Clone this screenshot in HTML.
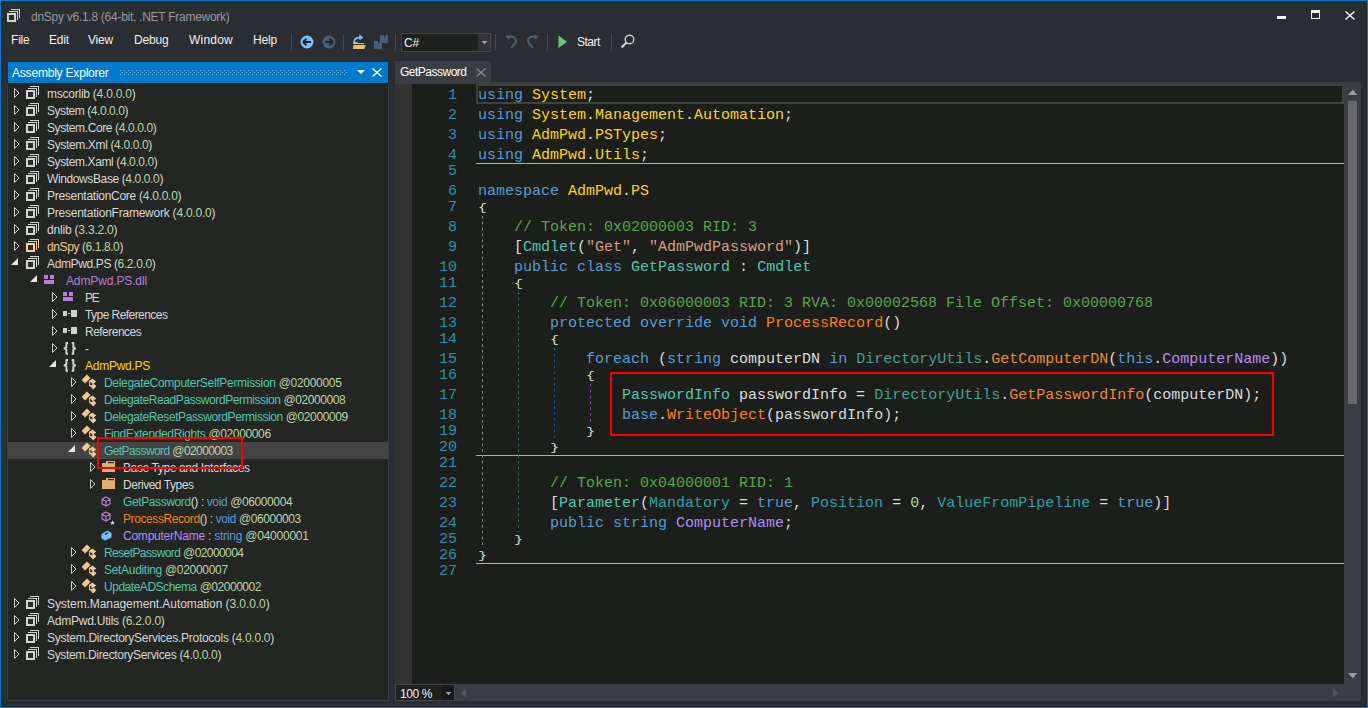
<!DOCTYPE html>
<html><head><meta charset="utf-8"><style>
*{margin:0;padding:0;box-sizing:border-box}
html,body{width:1368px;height:708px;overflow:hidden;background:#2a2d32;font-family:"Liberation Sans",sans-serif}
.a{position:absolute}
.ic{position:absolute;overflow:visible}
#win{position:absolute;left:0;top:0;width:1368px;height:708px;border:1px solid #007acc}
.menu{position:absolute;top:32px;font-size:12px;letter-spacing:-0.2px;color:#f1f1f1;line-height:17px}
.tb-sep{position:absolute;top:34px;width:1px;height:17px;background:#46464a}
#tree{position:absolute;left:7px;top:83px;width:382px;height:618px;background:#232623;border:1px solid #3a3d41;border-top:1px solid #1f1e1b}
.tt{position:absolute;font-size:12px;letter-spacing:-0.2px;line-height:17px;white-space:pre;padding-top:1px}
.sel{position:absolute;left:8px;width:380px;height:17px;background:#444444}
.nsi{position:absolute;font-size:12px;font-weight:bold;color:#d0d0d0;line-height:15px;letter-spacing:0px}
.ln{position:absolute;left:412px;width:45px;text-align:right;font-family:"Liberation Mono",monospace;font-size:15px;line-height:20px;color:#2b91af}
.br{display:inline-block;transform:scaleY(0.786);transform-origin:0 11.35px}
.cl{position:absolute;left:478px;font-family:"Liberation Mono",monospace;font-size:15px;line-height:20px;white-space:pre}
</style></head><body>
<div id="win"></div>
<div class="a" style="left:1px;top:1px;width:1366px;height:706px;border:1px solid #2b2727"></div>

<svg class="ic" style="left:6px;top:9px" width="16" height="16"><rect x="5" y="0" width="9" height="1" fill="#d2d4d0"/><rect x="13" y="0" width="1" height="9" fill="#d2d4d0"/><rect x="3" y="2" width="9" height="1" fill="#d2d4d0"/><rect x="11" y="2" width="1" height="9" fill="#d2d4d0"/><rect x="1" y="4" width="9" height="9" fill="#d2d4d0"/><rect x="3" y="6" width="5" height="5" fill="#2b2a2b"/></svg>
<div class="a" style="left:31px;top:9px;font-size:12px;letter-spacing:-0.27px;line-height:17px;color:#999999">dnSpy v6.1.8 (64-bit, .NET Framework)</div>
<div class="a" style="left:1277px;top:16px;width:9px;height:3px;background:#fff"></div>
<div class="a" style="left:1311px;top:10px;width:9px;height:9px;border:1px solid #fff;border-top-width:3px"></div>
<svg class="ic" style="left:1345px;top:11px" width="10" height="9"><path d="M0.5 0.5L9.5 8.5M9.5 0.5L0.5 8.5" stroke="#fff" stroke-width="1.3"/></svg>

<div class="menu" style="left:11px">File</div>
<div class="menu" style="left:49px">Edit</div>
<div class="menu" style="left:88px">View</div>
<div class="menu" style="left:134px">Debug</div>
<div class="menu" style="left:189px;letter-spacing:0.2px">Window</div>
<div class="menu" style="left:253px">Help</div>
<div class="tb-sep" style="left:291px"></div>
<div class="tb-sep" style="left:343px"></div>
<div class="tb-sep" style="left:395px"></div>
<div class="tb-sep" style="left:495px"></div>
<div class="tb-sep" style="left:547px"></div>
<div class="tb-sep" style="left:611px"></div>
<svg class="ic" style="left:300px;top:35px" width="14" height="14"><circle cx="7" cy="7" r="6.5" fill="#75beff"/><path d="M3 7H11 M3 7L6.5 3.8 M3 7L6.5 10.2" stroke="#252526" stroke-width="2" fill="none"/></svg>
<svg class="ic" style="left:322px;top:35px" width="14" height="14"><circle cx="7" cy="7" r="6.5" fill="#4a5f75"/><path d="M3 7H11 M11 7L7.5 3.8 M11 7L7.5 10.2" stroke="#252526" stroke-width="2" fill="none"/></svg>
<svg class="ic" style="left:351px;top:34px" width="17" height="17"><path d="M1.5 7.5 H6 L7 8.5 H13.5 V15.5 H1.5Z" fill="#dcb06e" stroke="#1a1a1a" stroke-width="0.8"/><path d="M2 10.5 H15.5 L13.5 15.5 H1.5Z" fill="#e6c07a" stroke="#1a1a1a" stroke-width="0.8"/><path d="M3 8.5 C3 4.5 5.5 3.6 8.8 3.6" stroke="#75beff" stroke-width="1.8" fill="none"/><path d="M8.3 0.6 L12.2 3.6 L8.3 6.6Z" fill="#75beff"/></svg>
<svg class="ic" style="left:373px;top:34px" width="16" height="16"><path d="M7 1 H15 V9 H7Z" fill="#4a5f75"/><rect x="11" y="1" width="1.2" height="2.5" fill="#2a2d32"/><path d="M1 7 H9 V15 H1Z" fill="#4a5f75"/><rect x="5" y="7" width="1.2" height="2.5" fill="#2a2d32"/></svg>
<div class="a" style="left:401px;top:33px;width:90px;height:19px;border:1px solid #46464a;background:#1f211f"></div>
<div class="a" style="left:478px;top:34px;width:12px;height:17px;background:#333337"></div>
<svg class="ic" style="left:481px;top:41px" width="8" height="5"><path d="M0.5 0H6.5L3.5 3.2Z" fill="#a8a8a8"/></svg>
<div class="a" style="left:404px;top:35px;font-size:12px;letter-spacing:-0.2px;line-height:17px;color:#f1f1f1">C#</div>
<svg class="ic" style="left:504px;top:34px" width="14" height="15"><path d="M4 3.5 C9 1 12 4 12 7 C12 9 10 11 7 14" stroke="#4a6075" stroke-width="2" fill="none"/><path d="M1 2 L6 1 L5 6Z" fill="#4a6075"/></svg>
<svg class="ic" style="left:526px;top:34px" width="14" height="15"><path d="M10 3.5 C5 1 2 4 2 7 C2 9 4 11 7 14" stroke="#4a6075" stroke-width="2" fill="none"/><path d="M13 2 L8 1 L9 6Z" fill="#4a6075"/></svg>
<svg class="ic" style="left:558px;top:35px" width="10" height="14"><path d="M0.5 0.5 L9 6.75 L0.5 13Z" fill="#6cc57c"/></svg>
<div class="a" style="left:577px;top:34px;font-size:12px;letter-spacing:-0.5px;line-height:17px;color:#f1f1f1">Start</div>
<svg class="ic" style="left:620px;top:34px" width="15" height="15"><circle cx="9.5" cy="5.5" r="4.3" stroke="#d0d0d0" stroke-width="1.4" fill="#2a2a2a"/><path d="M6.3 8.7 L1.5 13.5" stroke="#d0d0d0" stroke-width="2.2"/></svg>

<div class="a" style="left:8px;top:62px;width:380px;height:21px;background:#007acc"></div>
<div class="a" style="left:12px;top:65px;font-size:12px;letter-spacing:-0.2px;line-height:17px;color:#ffffff">Assembly Explorer</div>
<svg class="ic" style="left:120px;top:70px" width="227" height="5"><defs><pattern id="dots" width="4" height="4" patternUnits="userSpaceOnUse"><rect x="0" y="0" width="1" height="1" fill="#7db8e6"/><rect x="2" y="2" width="1" height="1" fill="#7db8e6"/></pattern></defs><rect width="227" height="5" fill="url(#dots)"/></svg>
<svg class="ic" style="left:357px;top:70px" width="8" height="5"><path d="M0 0H8L4 4Z" fill="#fff"/></svg>
<svg class="ic" style="left:372px;top:68px" width="10" height="9"><path d="M0.5 0.5L9.5 8.5M9.5 0.5L0.5 8.5" stroke="#fff" stroke-width="1.4"/></svg>
<div id="tree"></div>

<svg class="ic" style="left:13px;top:85px" width="8" height="17"><path d="M1.5 3.5 L6 8 L1.5 12.5Z" stroke="#d0d0d0" fill="none"/></svg>
<svg class="ic" style="left:25px;top:86px" width="16" height="16"><rect x="5" y="0" width="9" height="1" fill="#d2d4d0"/><rect x="13" y="0" width="1" height="9" fill="#d2d4d0"/><rect x="3" y="2" width="9" height="1" fill="#d2d4d0"/><rect x="11" y="2" width="1" height="9" fill="#d2d4d0"/><rect x="1" y="4" width="9" height="9" fill="#d2d4d0"/><rect x="3" y="6" width="5" height="5" fill="#2b2a2b"/></svg>
<div class="tt" style="left:47px;top:85px;letter-spacing:-0.241px"><span style="color:#d8d8d8">mscorlib</span><span style="color:#d8d8d8"> (</span><span style="color:#bcd6aa">4.0.0.0</span><span style="color:#d8d8d8">)</span></div>
<svg class="ic" style="left:13px;top:102px" width="8" height="17"><path d="M1.5 3.5 L6 8 L1.5 12.5Z" stroke="#d0d0d0" fill="none"/></svg>
<svg class="ic" style="left:25px;top:103px" width="16" height="16"><rect x="5" y="0" width="9" height="1" fill="#d2d4d0"/><rect x="13" y="0" width="1" height="9" fill="#d2d4d0"/><rect x="3" y="2" width="9" height="1" fill="#d2d4d0"/><rect x="11" y="2" width="1" height="9" fill="#d2d4d0"/><rect x="1" y="4" width="9" height="9" fill="#d2d4d0"/><rect x="3" y="6" width="5" height="5" fill="#2b2a2b"/></svg>
<div class="tt" style="left:47px;top:102px;letter-spacing:-0.440px"><span style="color:#d8d8d8">System</span><span style="color:#d8d8d8"> (</span><span style="color:#bcd6aa">4.0.0.0</span><span style="color:#d8d8d8">)</span></div>
<svg class="ic" style="left:13px;top:119px" width="8" height="17"><path d="M1.5 3.5 L6 8 L1.5 12.5Z" stroke="#d0d0d0" fill="none"/></svg>
<svg class="ic" style="left:25px;top:120px" width="16" height="16"><rect x="5" y="0" width="9" height="1" fill="#d2d4d0"/><rect x="13" y="0" width="1" height="9" fill="#d2d4d0"/><rect x="3" y="2" width="9" height="1" fill="#d2d4d0"/><rect x="11" y="2" width="1" height="9" fill="#d2d4d0"/><rect x="1" y="4" width="9" height="9" fill="#d2d4d0"/><rect x="3" y="6" width="5" height="5" fill="#2b2a2b"/></svg>
<div class="tt" style="left:47px;top:119px;letter-spacing:-0.385px"><span style="color:#d8d8d8">System.Core</span><span style="color:#d8d8d8"> (</span><span style="color:#bcd6aa">4.0.0.0</span><span style="color:#d8d8d8">)</span></div>
<svg class="ic" style="left:13px;top:136px" width="8" height="17"><path d="M1.5 3.5 L6 8 L1.5 12.5Z" stroke="#d0d0d0" fill="none"/></svg>
<svg class="ic" style="left:25px;top:137px" width="16" height="16"><rect x="5" y="0" width="9" height="1" fill="#d2d4d0"/><rect x="13" y="0" width="1" height="9" fill="#d2d4d0"/><rect x="3" y="2" width="9" height="1" fill="#d2d4d0"/><rect x="11" y="2" width="1" height="9" fill="#d2d4d0"/><rect x="1" y="4" width="9" height="9" fill="#d2d4d0"/><rect x="3" y="6" width="5" height="5" fill="#2b2a2b"/></svg>
<div class="tt" style="left:47px;top:136px;letter-spacing:-0.353px"><span style="color:#d8d8d8">System.Xml</span><span style="color:#d8d8d8"> (</span><span style="color:#bcd6aa">4.0.0.0</span><span style="color:#d8d8d8">)</span></div>
<svg class="ic" style="left:13px;top:153px" width="8" height="17"><path d="M1.5 3.5 L6 8 L1.5 12.5Z" stroke="#d0d0d0" fill="none"/></svg>
<svg class="ic" style="left:25px;top:154px" width="16" height="16"><rect x="5" y="0" width="9" height="1" fill="#d2d4d0"/><rect x="13" y="0" width="1" height="9" fill="#d2d4d0"/><rect x="3" y="2" width="9" height="1" fill="#d2d4d0"/><rect x="11" y="2" width="1" height="9" fill="#d2d4d0"/><rect x="1" y="4" width="9" height="9" fill="#d2d4d0"/><rect x="3" y="6" width="5" height="5" fill="#2b2a2b"/></svg>
<div class="tt" style="left:47px;top:153px;letter-spacing:-0.395px"><span style="color:#d8d8d8">System.Xaml</span><span style="color:#d8d8d8"> (</span><span style="color:#bcd6aa">4.0.0.0</span><span style="color:#d8d8d8">)</span></div>
<svg class="ic" style="left:13px;top:170px" width="8" height="17"><path d="M1.5 3.5 L6 8 L1.5 12.5Z" stroke="#d0d0d0" fill="none"/></svg>
<svg class="ic" style="left:25px;top:171px" width="16" height="16"><rect x="5" y="0" width="9" height="1" fill="#d2d4d0"/><rect x="13" y="0" width="1" height="9" fill="#d2d4d0"/><rect x="3" y="2" width="9" height="1" fill="#d2d4d0"/><rect x="11" y="2" width="1" height="9" fill="#d2d4d0"/><rect x="1" y="4" width="9" height="9" fill="#d2d4d0"/><rect x="3" y="6" width="5" height="5" fill="#2b2a2b"/></svg>
<div class="tt" style="left:47px;top:170px;letter-spacing:-0.385px"><span style="color:#d8d8d8">WindowsBase</span><span style="color:#d8d8d8"> (</span><span style="color:#bcd6aa">4.0.0.0</span><span style="color:#d8d8d8">)</span></div>
<svg class="ic" style="left:13px;top:187px" width="8" height="17"><path d="M1.5 3.5 L6 8 L1.5 12.5Z" stroke="#d0d0d0" fill="none"/></svg>
<svg class="ic" style="left:25px;top:188px" width="16" height="16"><rect x="5" y="0" width="9" height="1" fill="#d2d4d0"/><rect x="13" y="0" width="1" height="9" fill="#d2d4d0"/><rect x="3" y="2" width="9" height="1" fill="#d2d4d0"/><rect x="11" y="2" width="1" height="9" fill="#d2d4d0"/><rect x="1" y="4" width="9" height="9" fill="#d2d4d0"/><rect x="3" y="6" width="5" height="5" fill="#2b2a2b"/></svg>
<div class="tt" style="left:47px;top:187px;letter-spacing:-0.276px"><span style="color:#d8d8d8">PresentationCore</span><span style="color:#d8d8d8"> (</span><span style="color:#bcd6aa">4.0.0.0</span><span style="color:#d8d8d8">)</span></div>
<svg class="ic" style="left:13px;top:204px" width="8" height="17"><path d="M1.5 3.5 L6 8 L1.5 12.5Z" stroke="#d0d0d0" fill="none"/></svg>
<svg class="ic" style="left:25px;top:205px" width="16" height="16"><rect x="5" y="0" width="9" height="1" fill="#d2d4d0"/><rect x="13" y="0" width="1" height="9" fill="#d2d4d0"/><rect x="3" y="2" width="9" height="1" fill="#d2d4d0"/><rect x="11" y="2" width="1" height="9" fill="#d2d4d0"/><rect x="1" y="4" width="9" height="9" fill="#d2d4d0"/><rect x="3" y="6" width="5" height="5" fill="#2b2a2b"/></svg>
<div class="tt" style="left:47px;top:204px;letter-spacing:-0.233px"><span style="color:#d8d8d8">PresentationFramework</span><span style="color:#d8d8d8"> (</span><span style="color:#bcd6aa">4.0.0.0</span><span style="color:#d8d8d8">)</span></div>
<svg class="ic" style="left:13px;top:221px" width="8" height="17"><path d="M1.5 3.5 L6 8 L1.5 12.5Z" stroke="#d0d0d0" fill="none"/></svg>
<svg class="ic" style="left:25px;top:222px" width="16" height="16"><rect x="5" y="0" width="9" height="1" fill="#d2d4d0"/><rect x="13" y="0" width="1" height="9" fill="#d2d4d0"/><rect x="3" y="2" width="9" height="1" fill="#d2d4d0"/><rect x="11" y="2" width="1" height="9" fill="#d2d4d0"/><rect x="1" y="4" width="9" height="9" fill="#d2d4d0"/><rect x="3" y="6" width="5" height="5" fill="#2b2a2b"/></svg>
<div class="tt" style="left:47px;top:221px;letter-spacing:-0.200px"><span style="color:#d8d8d8">dnlib</span><span style="color:#d8d8d8"> (</span><span style="color:#bcd6aa">3.3.2.0</span><span style="color:#d8d8d8">)</span></div>
<svg class="ic" style="left:13px;top:238px" width="8" height="17"><path d="M1.5 3.5 L6 8 L1.5 12.5Z" stroke="#d0d0d0" fill="none"/></svg>
<svg class="ic" style="left:25px;top:239px" width="16" height="16"><rect x="5" y="0" width="9" height="1" fill="#f8cf8f"/><rect x="13" y="0" width="1" height="9" fill="#f8cf8f"/><rect x="3" y="2" width="9" height="1" fill="#f8cf8f"/><rect x="11" y="2" width="1" height="9" fill="#f8cf8f"/><rect x="1" y="4" width="9" height="9" fill="#f8cf8f"/><rect x="3" y="6" width="5" height="5" fill="#2b2a2b"/></svg>
<div class="tt" style="left:47px;top:238px;letter-spacing:-0.407px"><span style="color:#f5c98a">dnSpy</span><span style="color:#d8d8d8"> (</span><span style="color:#bcd6aa">6.1.8.0</span><span style="color:#d8d8d8">)</span></div>
<svg class="ic" style="left:10px;top:255px" width="10" height="17"><path d="M8 3 V10 H1Z" fill="#e6e6e6"/></svg>
<svg class="ic" style="left:25px;top:256px" width="16" height="16"><rect x="5" y="0" width="9" height="1" fill="#d2d4d0"/><rect x="13" y="0" width="1" height="9" fill="#d2d4d0"/><rect x="3" y="2" width="9" height="1" fill="#d2d4d0"/><rect x="11" y="2" width="1" height="9" fill="#d2d4d0"/><rect x="1" y="4" width="9" height="9" fill="#d2d4d0"/><rect x="3" y="6" width="5" height="5" fill="#2b2a2b"/></svg>
<div class="tt" style="left:47px;top:255px;letter-spacing:-0.372px"><span style="color:#d8d8d8">AdmPwd.PS</span><span style="color:#d8d8d8"> (</span><span style="color:#bcd6aa">6.2.0.0</span><span style="color:#d8d8d8">)</span></div>
<svg class="ic" style="left:29px;top:272px" width="10" height="17"><path d="M8 3 V10 H1Z" fill="#e6e6e6"/></svg>
<svg class="ic" style="left:44px;top:273px" width="16" height="16"><rect x="0" y="2" width="4" height="4" fill="#b57edc"/><rect x="6" y="2" width="4" height="4" fill="#b57edc"/><rect x="0" y="7" width="10" height="4" fill="#b57edc"/></svg>
<div class="tt" style="left:66px;top:272px;letter-spacing:-0.133px"><span style="color:#b57edc">AdmPwd.PS.dll</span></div>
<svg class="ic" style="left:51px;top:289px" width="8" height="17"><path d="M1.5 3.5 L6 8 L1.5 12.5Z" stroke="#d0d0d0" fill="none"/></svg>
<svg class="ic" style="left:63px;top:290px" width="16" height="16"><rect x="0" y="2" width="4" height="4" fill="#b57edc"/><rect x="6" y="2" width="4" height="4" fill="#b57edc"/><rect x="0" y="7" width="10" height="4" fill="#b57edc"/></svg>
<div class="tt" style="left:85px;top:289px;letter-spacing:-1.200px"><span style="color:#d8d8d8">PE</span></div>
<svg class="ic" style="left:51px;top:306px" width="8" height="17"><path d="M1.5 3.5 L6 8 L1.5 12.5Z" stroke="#d0d0d0" fill="none"/></svg>
<svg class="ic" style="left:63px;top:307px" width="16" height="16"><rect x="0" y="4" width="4" height="5" fill="#d0d2ce"/><rect x="5" y="6" width="2" height="1" fill="#d0d2ce"/><rect x="8" y="3" width="6" height="7" fill="#d0d2ce"/></svg>
<div class="tt" style="left:85px;top:306px;letter-spacing:-0.557px"><span style="color:#d8d8d8">Type References</span></div>
<svg class="ic" style="left:51px;top:323px" width="8" height="17"><path d="M1.5 3.5 L6 8 L1.5 12.5Z" stroke="#d0d0d0" fill="none"/></svg>
<svg class="ic" style="left:63px;top:324px" width="16" height="16"><rect x="0" y="4" width="4" height="5" fill="#d0d2ce"/><rect x="5" y="6" width="2" height="1" fill="#d0d2ce"/><rect x="8" y="3" width="6" height="7" fill="#d0d2ce"/></svg>
<div class="tt" style="left:85px;top:323px;letter-spacing:-0.522px"><span style="color:#d8d8d8">References</span></div>
<svg class="ic" style="left:51px;top:340px" width="8" height="17"><path d="M1.5 3.5 L6 8 L1.5 12.5Z" stroke="#d0d0d0" fill="none"/></svg>
<svg class="ic" style="left:63px;top:341px" width="16" height="16"><path d="M5 2 H3.4 V6.3 L1.5 7.4 L3.4 8.5 V12.8 H5 M8.7 2 H10.3 V6.3 L12.2 7.4 L10.3 8.5 V12.8 H8.7" stroke="#d3d5d1" stroke-width="1.9" stroke-linejoin="round" fill="none"/></svg>
<div class="tt" style="left:85px;top:340px;letter-spacing:0.000px"><span style="color:#d8d8d8">-</span></div>
<svg class="ic" style="left:48px;top:357px" width="10" height="17"><path d="M8 3 V10 H1Z" fill="#e6e6e6"/></svg>
<svg class="ic" style="left:63px;top:358px" width="16" height="16"><path d="M5 2 H3.4 V6.3 L1.5 7.4 L3.4 8.5 V12.8 H5 M8.7 2 H10.3 V6.3 L12.2 7.4 L10.3 8.5 V12.8 H8.7" stroke="#d3d5d1" stroke-width="1.9" stroke-linejoin="round" fill="none"/></svg>
<div class="tt" style="left:85px;top:357px;letter-spacing:-0.263px"><span style="color:#ffd700">AdmPwd.PS</span></div>
<svg class="ic" style="left:70px;top:374px" width="8" height="17"><path d="M1.5 3.5 L6 8 L1.5 12.5Z" stroke="#d0d0d0" fill="none"/></svg>
<svg class="ic" style="left:80px;top:373px" width="18" height="18"><path d="M1.6 6.9 L6.9 1.6 L10.5 5.1 L5.1 10.5Z" fill="#f2c98c"/><path d="M8.8 8.2 L12.4 5.4 L16.3 8.4 L12.2 11.6Z" fill="#f2c98c"/><path d="M10.4 13.4 L13.5 10.3 L16.4 13.2 L13.1 16.4Z" fill="#f2c98c"/><path d="M9.6 7.8 V12.6 H11.6 M9.6 8 H11" stroke="#f2c98c" stroke-width="1.1" fill="none"/><path d="M10.4 9 L12.2 11.2" stroke="#111" stroke-width="0.9"/></svg>
<div class="tt" style="left:104px;top:374px;letter-spacing:-0.303px"><span style="color:#4ec9b0">DelegateComputerSelfPermission</span><span style="color:#bcd6aa"> @02000005</span></div>
<svg class="ic" style="left:70px;top:391px" width="8" height="17"><path d="M1.5 3.5 L6 8 L1.5 12.5Z" stroke="#d0d0d0" fill="none"/></svg>
<svg class="ic" style="left:80px;top:390px" width="18" height="18"><path d="M1.6 6.9 L6.9 1.6 L10.5 5.1 L5.1 10.5Z" fill="#f2c98c"/><path d="M8.8 8.2 L12.4 5.4 L16.3 8.4 L12.2 11.6Z" fill="#f2c98c"/><path d="M10.4 13.4 L13.5 10.3 L16.4 13.2 L13.1 16.4Z" fill="#f2c98c"/><path d="M9.6 7.8 V12.6 H11.6 M9.6 8 H11" stroke="#f2c98c" stroke-width="1.1" fill="none"/><path d="M10.4 9 L12.2 11.2" stroke="#111" stroke-width="0.9"/></svg>
<div class="tt" style="left:104px;top:391px;letter-spacing:-0.410px"><span style="color:#4ec9b0">DelegateReadPasswordPermission</span><span style="color:#bcd6aa"> @02000008</span></div>
<svg class="ic" style="left:70px;top:408px" width="8" height="17"><path d="M1.5 3.5 L6 8 L1.5 12.5Z" stroke="#d0d0d0" fill="none"/></svg>
<svg class="ic" style="left:80px;top:407px" width="18" height="18"><path d="M1.6 6.9 L6.9 1.6 L10.5 5.1 L5.1 10.5Z" fill="#f2c98c"/><path d="M8.8 8.2 L12.4 5.4 L16.3 8.4 L12.2 11.6Z" fill="#f2c98c"/><path d="M10.4 13.4 L13.5 10.3 L16.4 13.2 L13.1 16.4Z" fill="#f2c98c"/><path d="M9.6 7.8 V12.6 H11.6 M9.6 8 H11" stroke="#f2c98c" stroke-width="1.1" fill="none"/><path d="M10.4 9 L12.2 11.2" stroke="#111" stroke-width="0.9"/></svg>
<div class="tt" style="left:104px;top:408px;letter-spacing:-0.405px"><span style="color:#4ec9b0">DelegateResetPasswordPermission</span><span style="color:#bcd6aa"> @02000009</span></div>
<svg class="ic" style="left:70px;top:425px" width="8" height="17"><path d="M1.5 3.5 L6 8 L1.5 12.5Z" stroke="#d0d0d0" fill="none"/></svg>
<svg class="ic" style="left:80px;top:424px" width="18" height="18"><path d="M1.6 6.9 L6.9 1.6 L10.5 5.1 L5.1 10.5Z" fill="#f2c98c"/><path d="M8.8 8.2 L12.4 5.4 L16.3 8.4 L12.2 11.6Z" fill="#f2c98c"/><path d="M10.4 13.4 L13.5 10.3 L16.4 13.2 L13.1 16.4Z" fill="#f2c98c"/><path d="M9.6 7.8 V12.6 H11.6 M9.6 8 H11" stroke="#f2c98c" stroke-width="1.1" fill="none"/><path d="M10.4 9 L12.2 11.2" stroke="#111" stroke-width="0.9"/></svg>
<div class="tt" style="left:104px;top:425px;letter-spacing:-0.367px"><span style="color:#4ec9b0">FindExtendedRights</span><span style="color:#bcd6aa"> @02000006</span></div>
<div class="sel" style="top:442px"></div>
<svg class="ic" style="left:67px;top:442px" width="10" height="17"><path d="M8 3 V10 H1Z" fill="#e6e6e6"/></svg>
<svg class="ic" style="left:80px;top:441px" width="18" height="18"><path d="M1.6 6.9 L6.9 1.6 L10.5 5.1 L5.1 10.5Z" fill="#f2c98c"/><path d="M8.8 8.2 L12.4 5.4 L16.3 8.4 L12.2 11.6Z" fill="#f2c98c"/><path d="M10.4 13.4 L13.5 10.3 L16.4 13.2 L13.1 16.4Z" fill="#f2c98c"/><path d="M9.6 7.8 V12.6 H11.6 M9.6 8 H11" stroke="#f2c98c" stroke-width="1.1" fill="none"/><path d="M10.4 9 L12.2 11.2" stroke="#111" stroke-width="0.9"/></svg>
<div class="tt" style="left:104px;top:442px;letter-spacing:-0.590px"><span style="color:#4ec9b0">GetPassword</span><span style="color:#bcd6aa"> @02000003</span></div>
<svg class="ic" style="left:89px;top:459px" width="8" height="17"><path d="M1.5 3.5 L6 8 L1.5 12.5Z" stroke="#d0d0d0" fill="none"/></svg>
<svg class="ic" style="left:102px;top:460px" width="16" height="16"><rect x="0" y="3" width="13" height="9" fill="#dcb06e"/><rect x="4" y="1" width="9" height="3" fill="#dcb06e"/><rect x="6" y="2" width="6" height="1.2" fill="#2a2a2a"/></svg>
<div class="tt" style="left:123px;top:459px;letter-spacing:-0.387px"><span style="color:#d8d8d8">Base Type and Interfaces</span></div>
<svg class="ic" style="left:89px;top:476px" width="8" height="17"><path d="M1.5 3.5 L6 8 L1.5 12.5Z" stroke="#d0d0d0" fill="none"/></svg>
<svg class="ic" style="left:102px;top:477px" width="16" height="16"><rect x="0" y="3" width="13" height="9" fill="#dcb06e"/><rect x="4" y="1" width="9" height="3" fill="#dcb06e"/><rect x="6" y="2" width="6" height="1.2" fill="#2a2a2a"/></svg>
<div class="tt" style="left:123px;top:476px;letter-spacing:-0.467px"><span style="color:#d8d8d8">Derived Types</span></div>
<svg class="ic" style="left:101px;top:494px" width="18" height="18"><path d="M5 3 L9 5.2 V9.8 L5 12 L1 9.8 V5.2Z M1 5.2 L5 7.4 L9 5.2 M5 7.4V12" stroke="#b180d7" stroke-width="1.1" fill="none"/></svg>
<div class="tt" style="left:123px;top:493px;letter-spacing:-0.393px"><span style="color:#4ec9b0">GetPassword</span><span style="color:#d8d8d8">()</span><span style="color:#d8d8d8"> : </span><span style="color:#569cd6">void</span><span style="color:#bcd6aa"> @06000004</span></div>
<svg class="ic" style="left:101px;top:509px" width="18" height="18"><path d="M5 3 L9 5.2 V9.8 L5 12 L1 9.8 V5.2Z M1 5.2 L5 7.4 L9 5.2 M5 7.4V12" stroke="#b180d7" stroke-width="1.1" fill="none"/><path d="M11.5 11 L12.2 12.9 L14.2 12.9 L12.6 14.1 L13.2 16 L11.5 14.9 L9.8 16 L10.4 14.1 L8.8 12.9 L10.8 12.9Z" fill="#d0d0d0"/></svg>
<div class="tt" style="left:123px;top:510px;letter-spacing:-0.410px"><span style="color:#ff8000">ProcessRecord</span><span style="color:#d8d8d8">()</span><span style="color:#d8d8d8"> : </span><span style="color:#569cd6">void</span><span style="color:#bcd6aa"> @06000003</span></div>
<svg class="ic" style="left:101px;top:528px" width="16" height="16"><path d="M0.5 6 L6.5 2.5 L10.5 5 V9.5 L4 12.5 L0.5 10.5Z" fill="#75beff"/><path d="M4 6.3 L7 4.6" stroke="#1e3a55" stroke-width="1.5"/></svg>
<div class="tt" style="left:123px;top:527px;letter-spacing:-0.233px"><span style="color:#b48cf5">ComputerName</span><span style="color:#d8d8d8"> : </span><span style="color:#569cd6">string</span><span style="color:#bcd6aa"> @04000001</span></div>
<svg class="ic" style="left:70px;top:544px" width="8" height="17"><path d="M1.5 3.5 L6 8 L1.5 12.5Z" stroke="#d0d0d0" fill="none"/></svg>
<svg class="ic" style="left:80px;top:543px" width="18" height="18"><path d="M1.6 6.9 L6.9 1.6 L10.5 5.1 L5.1 10.5Z" fill="#f2c98c"/><path d="M8.8 8.2 L12.4 5.4 L16.3 8.4 L12.2 11.6Z" fill="#f2c98c"/><path d="M10.4 13.4 L13.5 10.3 L16.4 13.2 L13.1 16.4Z" fill="#f2c98c"/><path d="M9.6 7.8 V12.6 H11.6 M9.6 8 H11" stroke="#f2c98c" stroke-width="1.1" fill="none"/><path d="M10.4 9 L12.2 11.2" stroke="#111" stroke-width="0.9"/></svg>
<div class="tt" style="left:104px;top:544px;letter-spacing:-0.591px"><span style="color:#4ec9b0">ResetPassword</span><span style="color:#bcd6aa"> @02000004</span></div>
<svg class="ic" style="left:70px;top:561px" width="8" height="17"><path d="M1.5 3.5 L6 8 L1.5 12.5Z" stroke="#d0d0d0" fill="none"/></svg>
<svg class="ic" style="left:80px;top:560px" width="18" height="18"><path d="M1.6 6.9 L6.9 1.6 L10.5 5.1 L5.1 10.5Z" fill="#f2c98c"/><path d="M8.8 8.2 L12.4 5.4 L16.3 8.4 L12.2 11.6Z" fill="#f2c98c"/><path d="M10.4 13.4 L13.5 10.3 L16.4 13.2 L13.1 16.4Z" fill="#f2c98c"/><path d="M9.6 7.8 V12.6 H11.6 M9.6 8 H11" stroke="#f2c98c" stroke-width="1.1" fill="none"/><path d="M10.4 9 L12.2 11.2" stroke="#111" stroke-width="0.9"/></svg>
<div class="tt" style="left:104px;top:561px;letter-spacing:-0.310px"><span style="color:#4ec9b0">SetAuditing</span><span style="color:#bcd6aa"> @02000007</span></div>
<svg class="ic" style="left:70px;top:578px" width="8" height="17"><path d="M1.5 3.5 L6 8 L1.5 12.5Z" stroke="#d0d0d0" fill="none"/></svg>
<svg class="ic" style="left:80px;top:577px" width="18" height="18"><path d="M1.6 6.9 L6.9 1.6 L10.5 5.1 L5.1 10.5Z" fill="#f2c98c"/><path d="M8.8 8.2 L12.4 5.4 L16.3 8.4 L12.2 11.6Z" fill="#f2c98c"/><path d="M10.4 13.4 L13.5 10.3 L16.4 13.2 L13.1 16.4Z" fill="#f2c98c"/><path d="M9.6 7.8 V12.6 H11.6 M9.6 8 H11" stroke="#f2c98c" stroke-width="1.1" fill="none"/><path d="M10.4 9 L12.2 11.2" stroke="#111" stroke-width="0.9"/></svg>
<div class="tt" style="left:104px;top:578px;letter-spacing:-0.474px"><span style="color:#4ec9b0">UpdateADSchema</span><span style="color:#bcd6aa"> @02000002</span></div>
<svg class="ic" style="left:13px;top:595px" width="8" height="17"><path d="M1.5 3.5 L6 8 L1.5 12.5Z" stroke="#d0d0d0" fill="none"/></svg>
<svg class="ic" style="left:25px;top:596px" width="16" height="16"><rect x="5" y="0" width="9" height="1" fill="#d2d4d0"/><rect x="13" y="0" width="1" height="9" fill="#d2d4d0"/><rect x="3" y="2" width="9" height="1" fill="#d2d4d0"/><rect x="11" y="2" width="1" height="9" fill="#d2d4d0"/><rect x="1" y="4" width="9" height="9" fill="#d2d4d0"/><rect x="3" y="6" width="5" height="5" fill="#2b2a2b"/></svg>
<div class="tt" style="left:47px;top:595px;letter-spacing:-0.076px"><span style="color:#d8d8d8">System.Management.Automation</span><span style="color:#d8d8d8"> (</span><span style="color:#bcd6aa">3.0.0.0</span><span style="color:#d8d8d8">)</span></div>
<svg class="ic" style="left:13px;top:612px" width="8" height="17"><path d="M1.5 3.5 L6 8 L1.5 12.5Z" stroke="#d0d0d0" fill="none"/></svg>
<svg class="ic" style="left:25px;top:613px" width="16" height="16"><rect x="5" y="0" width="9" height="1" fill="#d2d4d0"/><rect x="13" y="0" width="1" height="9" fill="#d2d4d0"/><rect x="3" y="2" width="9" height="1" fill="#d2d4d0"/><rect x="11" y="2" width="1" height="9" fill="#d2d4d0"/><rect x="1" y="4" width="9" height="9" fill="#d2d4d0"/><rect x="3" y="6" width="5" height="5" fill="#2b2a2b"/></svg>
<div class="tt" style="left:47px;top:612px;letter-spacing:-0.233px"><span style="color:#d8d8d8">AdmPwd.Utils</span><span style="color:#d8d8d8"> (</span><span style="color:#bcd6aa">6.2.0.0</span><span style="color:#d8d8d8">)</span></div>
<svg class="ic" style="left:13px;top:629px" width="8" height="17"><path d="M1.5 3.5 L6 8 L1.5 12.5Z" stroke="#d0d0d0" fill="none"/></svg>
<svg class="ic" style="left:25px;top:630px" width="16" height="16"><rect x="5" y="0" width="9" height="1" fill="#d2d4d0"/><rect x="13" y="0" width="1" height="9" fill="#d2d4d0"/><rect x="3" y="2" width="9" height="1" fill="#d2d4d0"/><rect x="11" y="2" width="1" height="9" fill="#d2d4d0"/><rect x="1" y="4" width="9" height="9" fill="#d2d4d0"/><rect x="3" y="6" width="5" height="5" fill="#2b2a2b"/></svg>
<div class="tt" style="left:47px;top:629px;letter-spacing:-0.267px"><span style="color:#d8d8d8">System.DirectoryServices.Protocols</span><span style="color:#d8d8d8"> (</span><span style="color:#bcd6aa">4.0.0.0</span><span style="color:#d8d8d8">)</span></div>
<svg class="ic" style="left:13px;top:646px" width="8" height="17"><path d="M1.5 3.5 L6 8 L1.5 12.5Z" stroke="#d0d0d0" fill="none"/></svg>
<svg class="ic" style="left:25px;top:647px" width="16" height="16"><rect x="5" y="0" width="9" height="1" fill="#d2d4d0"/><rect x="13" y="0" width="1" height="9" fill="#d2d4d0"/><rect x="3" y="2" width="9" height="1" fill="#d2d4d0"/><rect x="11" y="2" width="1" height="9" fill="#d2d4d0"/><rect x="1" y="4" width="9" height="9" fill="#d2d4d0"/><rect x="3" y="6" width="5" height="5" fill="#2b2a2b"/></svg>
<div class="tt" style="left:47px;top:646px;letter-spacing:-0.333px"><span style="color:#d8d8d8">System.DirectoryServices</span><span style="color:#d8d8d8"> (</span><span style="color:#bcd6aa">4.0.0.0</span><span style="color:#d8d8d8">)</span></div>
<div class="a" style="left:97px;top:437px;width:146px;height:32px;border:2px solid #ff0000"></div>
<div class="a" style="left:395px;top:61px;width:96px;height:23px;background:#3a3d41"></div>
<div class="a" style="left:400px;top:64px;font-size:12px;letter-spacing:-0.5px;line-height:17px;color:#ffffff">GetPassword</div>
<svg class="ic" style="left:476px;top:68px" width="10" height="9"><path d="M0.5 0.5L9.5 8.5M9.5 0.5L0.5 8.5" stroke="#8a8a8a" stroke-width="1.3"/></svg>
<div class="a" style="left:395px;top:82px;width:966px;height:2px;background:#3a3d41"></div>
<div class="a" style="left:395px;top:84px;width:17px;height:600px;background:#333333"></div>
<div class="a" style="left:412px;top:84px;width:932px;height:600px;background:#1b1e1b"></div>
<div class="a" style="left:1344px;top:82px;width:17px;height:619px;background:#3a3d41"></div>
<svg class="ic" style="left:1348px;top:89px" width="10" height="6"><path d="M0 6H9.5L4.75 0.5Z" fill="#999"/></svg>
<div class="a" style="left:1348px;top:101px;width:9px;height:303px;background:#686868"></div>
<svg class="ic" style="left:1348px;top:673px" width="10" height="6"><path d="M0 0H9.5L4.75 5.5Z" fill="#999"/></svg>
<div class="a" style="left:455px;top:684px;width:889px;height:17px;background:#3a3d41"></div>
<svg class="ic" style="left:460px;top:688px" width="6" height="10"><path d="M6 0V9.5L0.5 4.75Z" fill="#555"/></svg>
<svg class="ic" style="left:1333px;top:688px" width="6" height="10"><path d="M0 0V9.5L5.5 4.75Z" fill="#555"/></svg>
<div class="a" style="left:395px;top:684px;width:60px;height:17px;border:1px solid #46464a;background:#1f211f"></div>
<div class="a" style="left:442px;top:685px;width:12px;height:15px;background:#1a1a1a"></div>
<svg class="ic" style="left:445px;top:692px" width="8" height="5"><path d="M0.5 0H6.5L3.5 3.2Z" fill="#a0a0a0"/></svg>
<div class="a" style="left:400px;top:686px;font-size:12px;letter-spacing:-0.4px;line-height:17px;color:#f1f1f1">100 %</div>

<div class="a" style="left:476px;top:84px;width:868px;height:20px;border:2px solid #3f423f"></div>
<div class="a" style="left:476px;top:163px;width:868px;height:1px;background:#b0b0b0"></div>
<div class="a" style="left:476px;top:455px;width:868px;height:1px;background:#b0b0b0"></div>
<div class="a" style="left:476px;top:563px;width:868px;height:1px;background:#b0b0b0"></div>

<svg class="ic" style="left:482px;top:216px" width="1" height="332"><line x1="0.5" y1="0" x2="0.5" y2="332" stroke="#8a8a8a" stroke-width="1" stroke-dasharray="2.6 3.23"/></svg>
<svg class="ic" style="left:518px;top:292px" width="1" height="240"><line x1="0.5" y1="0" x2="0.5" y2="240" stroke="#1d7a5c" stroke-width="1" stroke-dasharray="2.6 3.23"/></svg>
<svg class="ic" style="left:554px;top:348px" width="1" height="92"><line x1="0.5" y1="0" x2="0.5" y2="92" stroke="#1b5a82" stroke-width="1" stroke-dasharray="2.6 3.23"/></svg>
<svg class="ic" style="left:590px;top:384px" width="1" height="38"><line x1="0.5" y1="0" x2="0.5" y2="38" stroke="#9048c8" stroke-width="1" stroke-dasharray="2.6 3.23"/></svg>
<div class="ln" style="top:86px">1</div>
<div class="cl" style="top:86px"><span style="color:#569cd6">using</span><span style="color:#dcdcdc"> </span><span style="color:#ffd700">System</span><span style="color:#dcdcdc">;</span></div>
<div class="ln" style="top:106px">2</div>
<div class="cl" style="top:106px"><span style="color:#569cd6">using</span><span style="color:#dcdcdc"> </span><span style="color:#ffd700">System</span><span style="color:#dcdcdc">.</span><span style="color:#ffd700">Management</span><span style="color:#dcdcdc">.</span><span style="color:#ffd700">Automation</span><span style="color:#dcdcdc">;</span></div>
<div class="ln" style="top:126px">3</div>
<div class="cl" style="top:126px"><span style="color:#569cd6">using</span><span style="color:#dcdcdc"> </span><span style="color:#ffd700">AdmPwd</span><span style="color:#dcdcdc">.</span><span style="color:#ffd700">PSTypes</span><span style="color:#dcdcdc">;</span></div>
<div class="ln" style="top:146px">4</div>
<div class="cl" style="top:146px"><span style="color:#569cd6">using</span><span style="color:#dcdcdc"> </span><span style="color:#ffd700">AdmPwd</span><span style="color:#dcdcdc">.</span><span style="color:#ffd700">Utils</span><span style="color:#dcdcdc">;</span></div>
<div class="ln" style="top:162px">5</div>
<div class="ln" style="top:182px">6</div>
<div class="cl" style="top:182px"><span style="color:#569cd6">namespace</span><span style="color:#dcdcdc"> </span><span style="color:#ffd700">AdmPwd</span><span style="color:#dcdcdc">.</span><span style="color:#ffd700">PS</span></div>
<div class="ln" style="top:198px">7</div>
<div class="cl" style="top:198px"><span style="color:#dcdcdc"><span class="br">{</span></span></div>
<div class="ln" style="top:218px">8</div>
<div class="cl" style="top:218px"><span style="color:#dcdcdc">    </span><span style="color:#57a64a">// Token: 0x02000003 RID: 3</span></div>
<div class="ln" style="top:238px">9</div>
<div class="cl" style="top:238px"><span style="color:#dcdcdc">    [</span><span style="color:#4ec9b0">Cmdlet</span><span style="color:#dcdcdc">(</span><span style="color:#d69d85">&quot;Get&quot;</span><span style="color:#dcdcdc">, </span><span style="color:#d69d85">&quot;AdmPwdPassword&quot;</span><span style="color:#dcdcdc">)]</span></div>
<div class="ln" style="top:258px">10</div>
<div class="cl" style="top:258px"><span style="color:#dcdcdc">    </span><span style="color:#569cd6">public</span><span style="color:#dcdcdc"> </span><span style="color:#569cd6">class</span><span style="color:#dcdcdc"> </span><span style="color:#4ec9b0">GetPassword</span><span style="color:#dcdcdc"> : </span><span style="color:#4ec9b0">Cmdlet</span></div>
<div class="ln" style="top:274px">11</div>
<div class="cl" style="top:274px"><span style="color:#dcdcdc">    <span class="br">{</span></span></div>
<div class="ln" style="top:294px">12</div>
<div class="cl" style="top:294px"><span style="color:#dcdcdc">        </span><span style="color:#57a64a">// Token: 0x06000003 RID: 3 RVA: 0x00002568 File Offset: 0x00000768</span></div>
<div class="ln" style="top:314px">13</div>
<div class="cl" style="top:314px"><span style="color:#dcdcdc">        </span><span style="color:#569cd6">protected</span><span style="color:#dcdcdc"> </span><span style="color:#569cd6">override</span><span style="color:#dcdcdc"> </span><span style="color:#569cd6">void</span><span style="color:#dcdcdc"> </span><span style="color:#ff8000">ProcessRecord</span><span style="color:#dcdcdc">()</span></div>
<div class="ln" style="top:330px">14</div>
<div class="cl" style="top:330px"><span style="color:#dcdcdc">        <span class="br">{</span></span></div>
<div class="ln" style="top:350px">15</div>
<div class="cl" style="top:350px"><span style="color:#dcdcdc">            </span><span style="color:#569cd6">foreach</span><span style="color:#dcdcdc"> (</span><span style="color:#569cd6">string</span><span style="color:#dcdcdc"> </span><span style="color:#dcdcdc">computerDN</span><span style="color:#dcdcdc"> </span><span style="color:#569cd6">in</span><span style="color:#dcdcdc"> </span><span style="color:#48a090">DirectoryUtils</span><span style="color:#dcdcdc">.</span><span style="color:#ee8a28">GetComputerDN</span><span style="color:#dcdcdc">(</span><span style="color:#569cd6">this</span><span style="color:#dcdcdc">.</span><span style="color:#b48cf5">ComputerName</span><span style="color:#dcdcdc">))</span></div>
<div class="ln" style="top:366px">16</div>
<div class="cl" style="top:366px"><span style="color:#dcdcdc">            <span class="br">{</span></span></div>
<div class="ln" style="top:386px">17</div>
<div class="cl" style="top:386px"><span style="color:#dcdcdc">                </span><span style="color:#4ec9b0">PasswordInfo</span><span style="color:#dcdcdc"> </span><span style="color:#dcdcdc">passwordInfo</span><span style="color:#dcdcdc"> = </span><span style="color:#48a090">DirectoryUtils</span><span style="color:#dcdcdc">.</span><span style="color:#ee8a28">GetPasswordInfo</span><span style="color:#dcdcdc">(</span><span style="color:#dcdcdc">computerDN</span><span style="color:#dcdcdc">);</span></div>
<div class="ln" style="top:406px">18</div>
<div class="cl" style="top:406px"><span style="color:#dcdcdc">                </span><span style="color:#569cd6">base</span><span style="color:#dcdcdc">.</span><span style="color:#ff8000">WriteObject</span><span style="color:#dcdcdc">(</span><span style="color:#dcdcdc">passwordInfo</span><span style="color:#dcdcdc">);</span></div>
<div class="ln" style="top:422px">19</div>
<div class="cl" style="top:422px"><span style="color:#dcdcdc">            <span class="br">}</span></span></div>
<div class="ln" style="top:438px">20</div>
<div class="cl" style="top:438px"><span style="color:#dcdcdc">        <span class="br">}</span></span></div>
<div class="ln" style="top:454px">21</div>
<div class="ln" style="top:474px">22</div>
<div class="cl" style="top:474px"><span style="color:#dcdcdc">        </span><span style="color:#57a64a">// Token: 0x04000001 RID: 1</span></div>
<div class="ln" style="top:494px">23</div>
<div class="cl" style="top:494px"><span style="color:#dcdcdc">        [</span><span style="color:#4ec9b0">Parameter</span><span style="color:#dcdcdc">(</span><span style="color:#2fa0a8">Mandatory</span><span style="color:#dcdcdc"> = </span><span style="color:#569cd6">true</span><span style="color:#dcdcdc">, </span><span style="color:#2fa0a8">Position</span><span style="color:#dcdcdc"> = </span><span style="color:#b5cea8">0</span><span style="color:#dcdcdc">, </span><span style="color:#2fa0a8">ValueFromPipeline</span><span style="color:#dcdcdc"> = </span><span style="color:#569cd6">true</span><span style="color:#dcdcdc">)]</span></div>
<div class="ln" style="top:514px">24</div>
<div class="cl" style="top:514px"><span style="color:#dcdcdc">        </span><span style="color:#569cd6">public</span><span style="color:#dcdcdc"> </span><span style="color:#569cd6">string</span><span style="color:#dcdcdc"> </span><span style="color:#b48cf5">ComputerName</span><span style="color:#dcdcdc">;</span></div>
<div class="ln" style="top:530px">25</div>
<div class="cl" style="top:530px"><span style="color:#dcdcdc">    <span class="br">}</span></span></div>
<div class="ln" style="top:546px">26</div>
<div class="cl" style="top:546px"><span style="color:#dcdcdc"><span class="br">}</span></span></div>
<div class="ln" style="top:562px">27</div>
<div class="a" style="left:610px;top:372px;width:664px;height:64px;border:2px solid #ff0000"></div>
</body></html>
